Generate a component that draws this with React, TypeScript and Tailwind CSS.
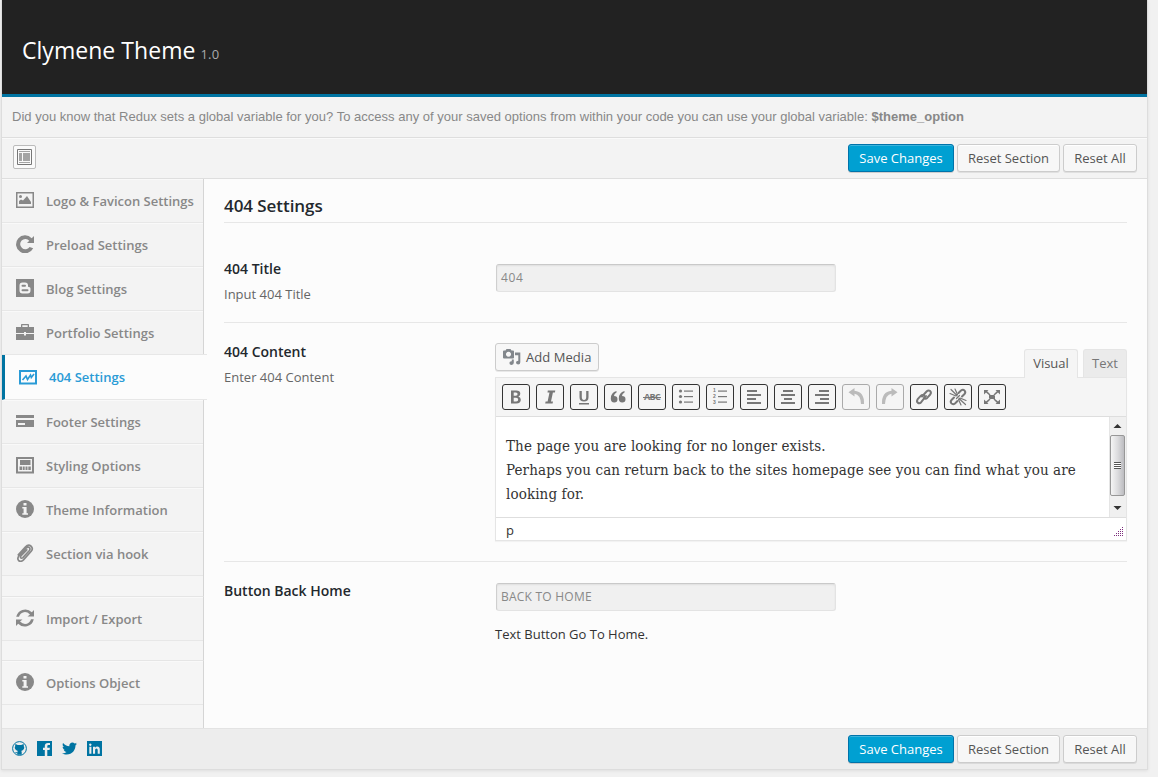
import React from "react";
import { FaTwitter } from "react-icons/fa";

type IconProps = { children: React.ReactNode; size?: number; className?: string };

function Icon({ children, size = 18, className = "" }: IconProps) {
  return (
    <svg viewBox={`0 0 ${size} ${size}`} width={size} height={size} fill="currentColor" className={`shrink-0 ${className}`}>
      {children}
    </svg>
  );
}

const picture = (
  <Icon>
    <path fillRule="evenodd" d="M0 1h18v16H0zM1.5 2.5v13h15v-13z" />
    <circle cx="4.5" cy="5.5" r="1.5" />
    <path d="M3 13V10l2-1.5 2 1L11 5l4 6v2z" />
  </Icon>
);
const repeat = (
  <Icon>
    <path d="M18 1V8H11L13.300 5.700A5.200 5.200 0 1 0 13.600 12.100L17.200 13.200A9 9 0 1 1 15.700 3.200Z" />
  </Icon>
);
const blogger = (
  <Icon>
    <path
      fillRule="evenodd"
      d="M0 0h18v18H0zM6.500 3.500Q3.500 3.500 3.500 6.500v5q0 3 3 3h5q3 0 3-3v-2q0-1.500-1.500-1.500T12 6.500q0-3-3-3zM6.500 5.700h2.500q1 0 1 1t-1 1H6.500q-1 0-1-1t1-1zM6.500 10.200h5q1 0 1 1t-1 1h-5q-1 0-1-1t1-1z"
    />
  </Icon>
);
const briefcase = (
  <Icon>
    <path fillRule="evenodd" d="M5 4V1.800Q5 1 5.800 1h6.400q.8 0 .8.800V4h5v6h-8V9H8v1H0V4zM6.300 4h5.400V2.200H6.300zM0 11h8v1.500h2V11h8v6H0z" />
  </Icon>
);
const graph = (
  <Icon>
    <path fillRule="evenodd" d="M0 2h18v14.500H0zM2 4v10.500h14V4z" />
    <path d="M3.500 12l3.500-4 1.500 3.500L11.500 7l.8 2.500L15 6" fill="none" stroke="currentColor" strokeWidth="1.600" />
  </Icon>
);
const card = (
  <Icon>
    <path fillRule="evenodd" d="M0 3h18v3H0zM0 8h18v7H0zM2 11v2h7v-2z" />
  </Icon>
);
const website = (
  <Icon>
    <path fillRule="evenodd" d="M0 1h18v16.500H0zM2 3v12.500h14V3z" />
    <path d="M4 4h10.500v5H4zM3.500 10.500H6v3.500H3.500zM6.700 10.500h2v3.500h-2zM9.500 10.500h2v3.500h-2zM12.300 10.500h2.500v3.500h-2.500z" />
  </Icon>
);
const info = (
  <Icon>
    <circle cx="9" cy="9" r="9" />
    <path fill="#f4f4f4" d="M7.500 3h3v2.400h-3zM6.300 7h4.300v6.200h1.400v1.500H6.300v-1.500h1.300V8.500H6.300z" />
  </Icon>
);
const clip = (
  <Icon>
    <g fill="none" stroke="currentColor" strokeLinecap="round">
      <path strokeWidth="1.700" d="M2.300 10.800L9.300 3Q12.300 0 14.800 2Q17.600 4.500 15.200 7.300L7.500 15.800Q4.600 18.500 2.500 16.300Q.9 14.100 3.300 11.500L10.200 4Q12.200 2.300 13.500 3.800Q14.600 5.200 13.200 6.800L6.900 13.600Q5.400 14.800 4.700 13.800Q4.100 12.900 5.300 11.500L10.800 5.800" />
    </g>
  </Icon>
);
const refresh = (
  <Icon>
    <path d="M18 1v6.500h-6.500L14 5.400Q9.500 1 5 4.500 3.500 6 3 7.800H.2Q1.500 2.500 6.300.9 12-.8 15.800 3.200zM0 17v-6.500h6.500L4 12.600q4.500 4.400 9 .9 1.500-1.500 2-3.300h2.800q-1.300 5.300-6.100 6.900Q6 18.800 2.200 14.800z" />
  </Icon>
);

function Item({ icon, label, active, className = "" }: { icon: React.ReactNode; label: string; active?: boolean; className?: string }) {
  if (active)
    return (
      <div className="z-10 flex h-[45px] w-[205px] shrink-0 items-center border-b border-l-3 border-b-[#e7e7e7] border-l-[#0074a2] bg-[#fcfcfc] pl-[14px] text-[#2a9bd6] shadow-[0_-1px_0_#e7e7e7]">
        {icon}
        <span className="ml-[12px] pt-[2px] whitespace-nowrap">{label}</span>
      </div>
    );
  return (
    <div className={`flex h-[44px] shrink-0 items-center border-r border-r-[#d5d5d5] pl-[14px] text-[#888] shadow-[inset_0_-1px_0_#e7e7e7,inset_0_1px_0_#f9f9f9] ${className}`}>
      <span className="-mt-[2px]">{icon}</span>
      <span className="ml-[12px] pt-[2px] whitespace-nowrap">{label}</span>
    </div>
  );
}

function Buttons() {
  const plain =
    "flex h-[28px] items-center justify-center rounded-[3px] border border-[#ccc] bg-[#f7f7f7] pt-[2px] text-[#555] shadow-[inset_0_1px_0_#fff,0_1px_0_rgba(0,0,0,0.08)] whitespace-nowrap";
  return (
    <div className="flex gap-[3px] text-[13px]">
      <button className="flex h-[28px] w-[106px] items-center justify-center rounded-[3px] border border-[#0073aa] bg-[#00a0d2] pt-[2px] whitespace-nowrap text-white shadow-[inset_0_1px_0_rgba(120,200,230,0.5),0_1px_0_rgba(0,0,0,0.15)]">
        Save Changes
      </button>
      <button className={`${plain} w-[103px]`}>Reset Section</button>
      <button className={`${plain} w-[74px]`}>Reset All</button>
    </div>
  );
}

const lines = (rows: [number, number][]) => (
  <Icon size={20}>
    {rows.map(([x, w], i) => (
      <rect key={i} x={x} y={3 + i * 4} width={w} height={2} />
    ))}
  </Icon>
);

const tools: { icon: React.ReactNode; off?: boolean }[] = [
  {
    icon: (
      <Icon size={20}>
        <path fillRule="evenodd" d="M5 3.500h5.200q4.100 0 4.100 3.200 0 2.200-1.900 2.900 2.400.7 2.400 3.200 0 3.700-4.500 3.700H5zm2.700 2v3.200h2.100q1.800 0 1.800-1.600T9.800 5.500zm0 5.200v3.700h2.500q2 0 2-1.900 0-1.800-2.100-1.800z" />
      </Icon>
    ),
  },
  { icon: <Icon size={20}><path d="M7.800 3.500h7.500l-.4 2h-2L11 14.500h2l-.4 2H5.200l.4-2h2L9.500 5.500h-2z" /></Icon> },
  {
    icon: (
      <Icon size={20}>
        <path d="M5.500 4h2.300v6q0 3 2.200 3t2.200-3V4h2.300v6.200q0 4.300-4.500 4.300T5.500 10.200zM5 16h10v1.500H5z" />
      </Icon>
    ),
  },
  {
    icon: (
      <Icon size={20}>
        <path d="M8.500 4v1.500Q6 6.800 6 9q3.500 0 3.500 3.200T6.200 15.500Q2.800 15.500 2.800 11.500 2.800 5.500 8.500 4zM16.500 4v1.500Q14 6.800 14 9q3.500 0 3.500 3.200t-3.300 3.300q-3.400 0-3.400-4 0-6 5.700-7.500z" />
      </Icon>
    ),
  },
  { icon: <span className="relative flex h-[20px] items-center text-[9px] font-bold tracking-[-0.7px] before:absolute before:-inset-x-[1px] before:top-[10px] before:h-px before:bg-[#777]">ABC</span> },
  {
    icon: (
      <Icon size={20}>
        {[4, 9.5, 15].map((y) => (
          <g key={y}>
            <circle cx="4.500" cy={y} r="1.600" />
            <rect x="8" y={y - 0.5} width="9" height="1.200" />
          </g>
        ))}
      </Icon>
    ),
  },
  {
    icon: (
      <Icon size={20} className="font-['Liberation_Sans',sans-serif]">
        {["1", "2", "3"].map((n, i) => (
          <g key={n}>
            <text x="3" y={5 + i * 6} fontSize="5" fontWeight="700">{n}</text>
            <rect x="8" y={3.5 + i * 5.5} width="9" height="1.200" />
          </g>
        ))}
      </Icon>
    ),
  },
  { icon: lines([[3, 10], [3, 14], [3, 9], [3, 14]]) },
  { icon: lines([[5, 10], [3, 14], [6, 8], [3, 14]]) },
  { icon: lines([[7, 10], [3, 14], [8, 9], [3, 14]]) },
  { off: true, icon: <Icon size={20}><path d="M8.500 3.800V1L2.500 5.200 8.500 9.500V6.700Q14.500 7.500 15 17h3Q18.500 4.800 8.500 3.800z" /></Icon> },
  { off: true, icon: <Icon size={20}><path d="M11.500 3.800V1L17.500 5.200 11.500 9.500V6.700Q5.500 7.500 5 17H2Q1.500 4.800 11.500 3.800z" /></Icon> },
  {
    icon: (
      <Icon size={20}>
        <g fill="none" stroke="currentColor" strokeWidth="2" strokeLinecap="round">
          <path d="M8 9.500L12.800 4.300Q14.500 2.700 16.200 4.100 17.600 5.700 16.200 7.500L13.200 10.900Q11.600 12.300 9.900 11.100" />
          <path d="M12 9L7.200 15.200Q5.500 17 3.700 15.600 2.300 14.200 3.700 12.200L6.700 8.900Q8.300 7.500 10 8.600" />
        </g>
      </Icon>
    ),
  },
  {
    icon: (
      <Icon size={20}>
        <g fill="none" stroke="currentColor" strokeWidth="2" strokeLinecap="round">
          <path d="M10.500 6L13 3.500Q15 2 16.600 3.600 18 5.300 16.500 7L14 9.500" />
          <path d="M9.500 14L7 16.500Q5 18 3.400 16.400 2 14.700 3.500 13L6 10.500" />
          <path strokeWidth="1.200" d="M9 8.500L3 2.500M8 9L2 6.500M9.500 7.500L7 2M11 11.500l6.500 6M12 11l6 2.500M10.500 12.500l2.500 5.500M8.500 11.500l3-3" />
        </g>
      </Icon>
    ),
  },
  {
    icon: (
      <Icon size={20}>
        <path d="M7 8h6v4H7zM2 3h4.500L5.200 4.300 8.500 7.600 7.600 8.500 4 5.500 2 7.500zM18 3h-4.500l1.300 1.300-3.300 3.300.9.900L16 5.500l2 2zM2 17h4.500l-1.300-1.300 3.300-3.300-.9-.9L4 14.500l-2-2zM18 17h-4.500l1.300-1.300-3.300-3.300.9-.9 3.600 3 2-2z" />
      </Icon>
    ),
  },
];

function Editor() {
  return (
    <div>
      <div className="flex h-[34px] items-start justify-between">
        <button className="flex h-[28px] w-[104px] items-center rounded-[3px] border border-[#ccc] bg-[#f7f7f7] pl-[7px] text-[13px] whitespace-nowrap text-[#555] shadow-[0_1px_0_rgba(0,0,0,0.08)]">
          <svg viewBox="0 0 18 18" width="18" height="18" fill="#82878c">
            <path fillRule="evenodd" d="M0 3.500q0-1 1-1h1.500L3.500 1h4l1 1.500H10q1 0 1 1v6q0 1-1 1H1q-1 0-1-1zM5.500 3.800a2.500 2.500 0 1 0 .01 0z" />
            <path d="M12 4.500h5.300v9.800q0 2.200-2.100 2.200t-2.200-1.900q0-1.800 2.300-1.800V7.200H12zM8.800 11.500h2v3.300q0 2.100-2.200 2.100t-2.200-1.900q0-1.900 2.400-1.700z" />
          </svg>
          <span className="ml-[5px] pt-[2px] tracking-[0.05px]">Add Media</span>
        </button>
        <div className="mt-[6px] flex gap-[5px] text-[13px]">
          <div className="relative z-10 flex h-[29px] w-[54px] items-center justify-center rounded-t-[3px] border border-b-0 border-[#e5e5e5] bg-[#f5f5f5] text-[#555]">Visual</div>
          <div className="flex h-[28px] w-[44px] items-center justify-center rounded-t-[3px] border border-b-0 border-[#e5e5e5] bg-[#ebebeb] text-[#777]">Text</div>
        </div>
      </div>
      <div className="flex h-[164px] w-[632px] flex-col border border-[#e5e5e5] bg-white shadow-[0_1px_1px_rgba(0,0,0,0.04)]">
        <div className="flex h-[39px] shrink-0 gap-[6px] border-b border-[#dedede] bg-[#f5f5f5] pt-[6px] pl-[6px]">
          {tools.map((t, i) => (
            <div
              key={i}
              className={`flex h-[26px] w-[28px] items-center justify-center rounded-[3px] border ${t.off ? "border-[#aaa] text-[#bbb]" : "border-[#333] text-[#777]"}`}
            >
              {t.icon}
            </div>
          ))}
        </div>
        <div className="flex h-[101px] shrink-0 justify-between border-b border-[#dedede]">
          <div className="pt-[17px] pl-[10px] font-['DejaVu_Serif_Condensed','DejaVu_Serif',serif] text-[15px] leading-[24px] tracking-[0.11px] whitespace-nowrap text-[#333]">
            The page you are looking for no longer exists.
            <br />
            Perhaps you can return back to the sites homepage see you can find what you are
            <br />
            looking for.
          </div>
          <div className="flex w-[17px] flex-col items-start border-l border-[#e5e5e5] bg-[#f0f0f0]">
            <svg width="15" height="18" className="shrink-0"><path d="M3.500 11l4-4 4 4z" fill="#333" /></svg>
            <div className="flex h-[61px] w-[15px] shrink-0 flex-col items-center justify-center rounded-[2px] border border-[#979797] bg-linear-to-r from-[#f5f5f5] via-[#dcdcde] to-[#bcbcc0]">
              <i className="h-px w-[7px] bg-[#555]" />
              <i className="h-px w-[7px] bg-[#fff]" />
              <i className="h-px w-[7px] bg-[#555]" />
              <i className="h-px w-[7px] bg-[#fff]" />
              <i className="h-px w-[7px] bg-[#555]" />
              <i className="h-px w-[7px] bg-[#fff]" />
              <i className="h-px w-[7px] bg-[#555]" />
            </div>
            <svg width="15" height="20" className="shrink-0"><path d="M3.500 10h8l-4 4z" fill="#333" /></svg>
          </div>
        </div>
        <div className="flex h-[22px] items-center justify-between pr-[2px] pl-[10px] text-[13px] text-[#333]">
          <span className="pt-[3px]">p</span>
          <svg width="10" height="10" className="mt-[6px]" fill="#7d2f7d">
            {[0, 1, 2, 3, 4].flatMap((r) =>
              Array.from({ length: r + 1 }, (_, c) => <rect key={`${r}-${c}`} x={8 - c * 2} y={r * 2} width="1" height="1" />)
            )}
          </svg>
        </div>
      </div>
    </div>
  );
}

const field =
  "flex h-[28px] w-[340px] items-center rounded-[3px] border border-[#e3e3e3] border-t-[#c9c9c9] border-l-[#cfcfcf] bg-[#f0f0f0] pl-[4px] text-[12px] text-[#888] shadow-[inset_0_1px_2px_rgba(0,0,0,0.07)]";

export default function App() {
  return (
    <div className="h-[777px] w-[1158px] overflow-hidden bg-[#f1f1f1] pl-px font-['Open_Sans',sans-serif]">
      <div className="flex h-[770px] w-[1147px] flex-col border-x border-b border-[#ddd] bg-[#f3f3f3] shadow-[0_1px_3px_rgba(0,0,0,0.08)]">
        <header className="flex h-[97px] shrink-0 items-baseline border-b-3 border-[#0074a2] bg-[#222] pt-[33px] pl-[20px]">
          <h1 className="text-[23px] leading-[34px] tracking-[0.04px] text-white">Clymene Theme</h1>
          <span className="ml-[5px] text-[13px] tracking-[0.2px] text-[#aaa]">1.0</span>
        </header>
        <div className="flex h-[41px] shrink-0 items-center border-b border-[#dedede] pl-[10px] font-['Liberation_Sans',sans-serif] text-[13px] tracking-[0.008px] whitespace-nowrap text-[#888]">
          <span className="-mt-px">
            Did you know that Redux sets a global variable for you? To access any of your saved options from within your code you can use your global variable:{" "}
            <b>$theme_option</b>
          </span>
        </div>
        <div className="flex h-[41px] shrink-0 items-center justify-between border-t border-b border-t-[#fafafa] border-b-[#dedede] pr-[10px] pl-[11px]">
          <div className="-mt-[3px] flex h-[24px] w-[23px] items-center justify-center rounded-[2px] border border-[#bbb] bg-[#fafafa]">
            <svg width="15" height="16" fill="none">
              <path d="M.5.500h14v15H.5z" stroke="#777" />
              <path d="M2 2h11v1H2zM2 4h3v8H2zM6 4h7v8H6zM2 13h11v1H2z" fill="#a5a5a5" />
            </svg>
          </div>
          <div className="-mt-px"><Buttons /></div>
        </div>
        <div className="flex h-[549px] shrink-0">
          <nav className="flex w-[202px] shrink-0 flex-col bg-[#f3f3f3] text-[13px] font-semibold">
            <Item icon={picture} label="Logo & Favicon Settings" />
            <Item icon={repeat} label="Preload Settings" />
            <Item icon={blogger} label="Blog Settings" />
            <Item icon={briefcase} label="Portfolio Settings" />
            <Item icon={graph} label="404 Settings" active />
            <Item icon={card} label="Footer Settings" />
            <Item icon={website} label="Styling Options" />
            <Item icon={info} label="Theme Information" />
            <Item icon={clip} label="Section via hook" />
            <div className="h-[21px] shrink-0 border-r border-b border-r-[#d5d5d5] border-b-[#e5e5e5] bg-[#f5f5f5]" />
            <Item icon={refresh} label="Import / Export" />
            <div className="h-[20px] shrink-0 border-r border-b border-r-[#d5d5d5] border-b-[#e5e5e5] bg-[#f5f5f5]" />
            <Item icon={info} label="Options Object" className="bg-[#f5f5f5]" />
            <div className="flex-1 border-r border-[#d5d5d5] bg-[#f5f5f5]" />
          </nav>
          <main className="w-[943px] bg-[#fcfcfc] pr-[20px] pl-[20px] text-[13px] text-[#666]">
            <h2 className="flex h-[44px] items-center border-b border-[#e7e7e7] pt-[11px] text-[17px] font-semibold tracking-[-0.06px] text-[#23282d]">404 Settings</h2>
            <section className="flex h-[100px] border-b border-[#e7e7e7]">
              <div className="w-[272px] pt-[36px]">
                <h3 className="text-[14px] leading-[20px] font-semibold text-[#23282d]">404 Title</h3>
                <p className="mt-[6px] leading-[19px]">Input 404 Title</p>
              </div>
              <div className="pt-[41px]">
                <div className={`${field} tracking-[0.6px]`}>404</div>
              </div>
            </section>
            <section className="flex h-[239px] border-b border-[#e7e7e7]">
              <div className="w-[271px] pt-[19px]">
                <h3 className="text-[14px] leading-[20px] font-semibold text-[#23282d]">404 Content</h3>
                <p className="mt-[6px] leading-[19px]">Enter 404 Content</p>
              </div>
              <div className="pt-[20px]"><Editor /></div>
            </section>
            <section className="flex">
              <h3 className="w-[271px] pt-[19px] text-[14px] leading-[20px] font-semibold text-[#23282d]">Button Back Home</h3>
              <div className="pt-[21px]">
                <div className={`${field} ml-px tracking-[0.23px]`}>BACK TO HOME</div>
                <p className="mt-[14px] leading-[19px] text-[#333]">Text Button Go To Home.</p>
              </div>
            </section>
          </main>
        </div>
        <footer className="flex flex-1 items-center justify-between border-t border-[#e3e3e3] bg-[#ededed] pr-[10px] pl-[10px] text-[#0074a2]">
          <div className="-mt-[2px] flex gap-[10px]">
            <svg viewBox="0 0 15 15" width="15" height="15">
              <circle cx="7.500" cy="7.500" r="6.900" fill="none" stroke="currentColor" />
              <path fill="currentColor" d="M3.500 3l2.300.9h3.400L11.500 3q.5 1 .3 2.200.7 1 .3 2.400Q11.500 9.600 9.200 9.900q.5.500.5 1.300v2.500H5.300V12.300Q3.800 12.500 3.100 11l1 .1q.7.800 1.300.3Q5.400 10.300 5.800 9.900 3.500 9.600 2.900 7.600 2.500 6.200 3.200 5.200 3 4 3.500 3z" />
            </svg>
            <svg viewBox="0 0 15 15" width="15" height="15" fill="currentColor">
              <path fillRule="evenodd" d="M0 0h15v15H0zM7.800 15h2.500V9h2.300l.3-2.300h-2.600V5.200q0-1.100 1.100-1.100H13V2H11Q7.800 2 7.800 5v1.700H6V9h1.800z" />
            </svg>
            <FaTwitter size={15} />
            <svg viewBox="0 0 15 15" width="15" height="15" fill="currentColor">
              <path fillRule="evenodd" d="M0 0h15v15H0zM2.300 5.800v7h2.100v-7zM3.300 2.500a1.200 1.200 0 1 0 .01 0zM6 5.800v7h2.100V9q0-1.500 1.300-1.500T10.700 9v3.800h2.100V8.500q0-2.900-2.500-2.900-1.500 0-2.200 1.100v-.9z" />
            </svg>
          </div>
          <Buttons />
        </footer>
      </div>
    </div>
  );
}
